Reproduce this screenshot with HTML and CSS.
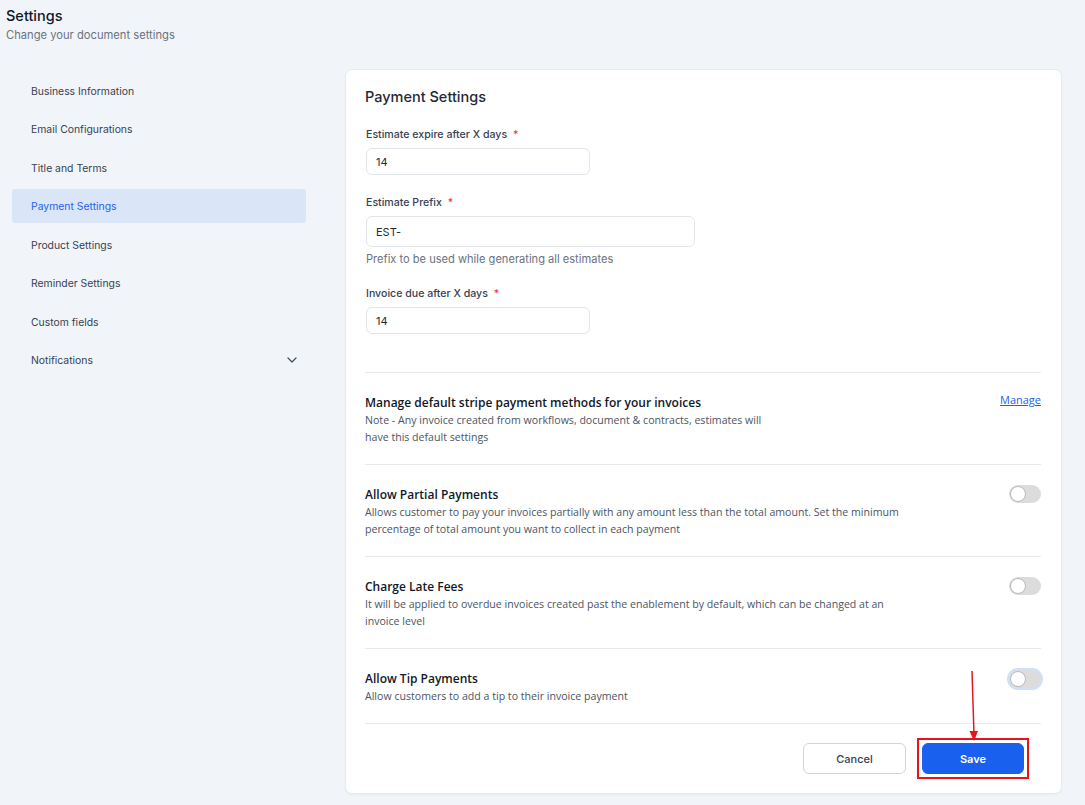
FILE: index.html
```html
<!DOCTYPE html>
<html>
<head>
<meta charset="utf-8">
<link rel="stylesheet" href="styles.css">
</head>
<body>
<header class="page-head">
  <h1 class="page-title">Settings</h1>
  <p class="page-sub">Change your document settings</p>
</header>
<div class="layout">
  <nav class="sidebar">
    <a class="nav-item">Business Information</a>
    <a class="nav-item">Email Configurations</a>
    <a class="nav-item">Title and Terms</a>
    <a class="nav-item active">Payment Settings</a>
    <a class="nav-item">Product Settings</a>
    <a class="nav-item">Reminder Settings</a>
    <a class="nav-item">Custom fields</a>
    <a class="nav-item has-sub">Notifications
      <svg class="chev" width="10" height="6" viewBox="0 0 10 6"><path d="M1 1l4 4 4-4" fill="none" stroke="#4b5563" stroke-width="1.4" stroke-linecap="round" stroke-linejoin="round"/></svg>
    </a>
  </nav>
  <main class="card">
    <h2 class="card-title">Payment Settings</h2>
    <div class="field">
      <label class="label">Estimate expire after X days <span class="req">*</span></label>
      <div class="input short">14</div>
    </div>
    <div class="field">
      <label class="label">Estimate Prefix <span class="req">*</span></label>
      <div class="input long">EST-</div>
      <p class="help">Prefix to be used while generating all estimates</p>
    </div>
    <div class="field last">
      <label class="label">Invoice due after X days <span class="req">*</span></label>
      <div class="input short">14</div>
    </div>

    <section class="row">
      <div class="row-text">
        <h3 class="row-title">Manage default stripe payment methods for your invoices</h3>
        <p class="row-desc narrow">Note - Any invoice created from workflows, document &amp; contracts, estimates will have this default settings</p>
      </div>
      <a class="manage">Manage</a>
    </section>
    <section class="row">
      <div class="row-text">
        <h3 class="row-title">Allow Partial Payments</h3>
        <p class="row-desc">Allows customer to pay your invoices partially with any amount less than the total amount. Set the minimum percentage of total amount you want to collect in each payment</p>
      </div>
      <span class="toggle"><span class="knob"></span></span>
    </section>
    <section class="row">
      <div class="row-text">
        <h3 class="row-title">Charge Late Fees</h3>
        <p class="row-desc">It will be applied to overdue invoices created past the enablement by default, which can be changed at an invoice level</p>
      </div>
      <span class="toggle"><span class="knob"></span></span>
    </section>
    <section class="row">
      <div class="row-text">
        <h3 class="row-title">Allow Tip Payments</h3>
        <p class="row-desc">Allow customers to add a tip to their invoice payment</p>
      </div>
      <span class="toggle focus"><span class="knob"></span></span>
    </section>

    <div class="actions">
      <button class="btn cancel">Cancel</button>
      <span class="highlight"><button class="btn save">Save</button></span>
    </div>
  </main>
</div>
<svg class="arrow" width="20" height="72" viewBox="0 0 20 72">
  <line x1="9" y1="0" x2="11" y2="64" stroke="#e8141b" stroke-width="1.5"/>
  <path d="M6.5 60 L11 70 L15 60 Z" fill="#e8141b"/>
</svg>
</body>
</html>
```

FILE: styles.css
```css
* { box-sizing: border-box; }
html, body { margin: 0; padding: 0; }
body {
  background: #f1f5f9;
  font-family: Inter, "Noto Sans", sans-serif;
  color: #111827;
  width: 1085px;
  height: 805px;
  position: relative;
  overflow: hidden;
}
.page-head { padding: 6px 6px 0; }
.page-title {
  margin: 0;
  font-size: 14.5px;
  line-height: 20px;
  font-weight: 500;
  color: #111827;
}
.page-sub {
  margin: 0;
  font-size: 11.2px;
  line-height: 18px;
  color: #6b7280;
}
.layout {
  display: flex;
  align-items: flex-start;
  padding: 26px 24px 0 12px;
}
.sidebar {
  width: 294px;
  flex: none;
  display: flex;
  flex-direction: column;
  gap: 4.43px;
  padding-top: 4px;
}
.nav-item {
  height: 34px;
  display: flex;
  align-items: center;
  justify-content: space-between;
  padding: 1px 8px 0 19px;
  font-size: 10.4px;
  color: #374151;
  border-radius: 3px;
}
.nav-item.active {
  background: #dae6f7;
  color: #2563eb;
}
.chev { margin-right: 1px; }
.card {
  margin-left: 40px;
  flex: 1;
  background: #fff;
  border-radius: 6px;
  box-shadow: 0 0 0 1px #e6ebf1, 0 1px 3px rgba(15, 23, 42, 0.08);
  padding: 17px 20px 19px 19px;
}
.card-title {
  margin: 0 0 19px;
  font-size: 14.5px;
  line-height: 20px;
  font-weight: 500;
  color: #1f2937;
}
.field { margin-bottom: 19px; }
.field:nth-child(3) { margin-bottom: 18px; }
.field.last { margin-bottom: 38px; }
.label {
  display: block;
  font-size: 10.6px;
  line-height: 16px;
  font-weight: 500;
  color: #374151;
  padding: 1px 0 0 1px;
  margin-bottom: 5px;
}
.req { color: #ef4444; margin-left: 3px; }
.input {
  margin-left: 1px;
  height: 27px;
  border: 1px solid #e2e5ea;
  border-radius: 6px;
  font-size: 11px;
  color: #1f2937;
  display: flex;
  align-items: center;
  padding-left: 9px;
}
.input.short { width: 224px; }
.input.long { width: 329px; height: 31px; margin-top: 5px; }
.field:nth-child(3) .label { margin-bottom: 0; }
.help {
  margin: 4px 0 0;
  font-size: 11.1px;
  line-height: 16px;
  color: #6b7280;
  padding-left: 1px;
}
.row {
  display: flex;
  justify-content: space-between;
  align-items: flex-start;
  border-top: 1px solid #e8eaee;
  padding: 20px 0 19px;
}
.row-text { padding-top: 1px; margin-bottom: -1px; }
.row-title {
  margin: 0;
  font-family: "Open Sans", "Noto Sans", sans-serif;
  font-size: 12px;
  line-height: 18px;
  font-weight: 600;
  color: #111827;
}
.row-desc {
  margin: 0;
  font-family: "Open Sans", "Noto Sans", sans-serif;
  font-size: 10.6px;
  line-height: 17px;
  color: #4b5563;
  max-width: 545px;
}
.row-desc.narrow { max-width: 410px; }
.manage {
  font-family: "Open Sans", "Noto Sans", sans-serif;
  font-size: 11px;
  line-height: 14px;
  color: #2563eb;
  text-decoration: underline;
}
.toggle {
  flex: none;
  width: 32px;
  height: 18px;
  border-radius: 9px;
  background: #dcdcdc;
  position: relative;
}
.toggle .knob {
  position: absolute;
  left: 1px;
  top: 1px;
  width: 16px;
  height: 16px;
  border-radius: 50%;
  background: #fff;
  border: 1px solid #b9b9b9;
}
.toggle.focus { box-shadow: 0 0 0 2px #cfe0fb; margin-top: 1px; }
.actions {
  border-top: 1px solid #e8eaee;
  padding: 19px 17px 0 0;
  display: flex;
  justify-content: flex-end;
  align-items: center;
  gap: 11px;
}
.btn {
  font-family: Inter, "Noto Sans", sans-serif;
  font-size: 11px;
  height: 31px;
  width: 103px;
  border-radius: 6px;
  cursor: pointer;
}
.cancel {
  background: #fff;
  border: 1px solid #d1d5db;
  color: #374151;
  font-weight: 500;
}
.highlight {
  display: inline-flex;
  border: 2px solid #e8141b;
  padding: 3px;
  margin: -5px -5px -5px 0;
}
.save {
  background: #1a60ef;
  border: 1px solid #1a60ef;
  color: #fff;
  font-weight: 600;
  width: 102px;
}
.arrow {
  position: absolute;
  left: 963px;
  top: 671px;
}
```
